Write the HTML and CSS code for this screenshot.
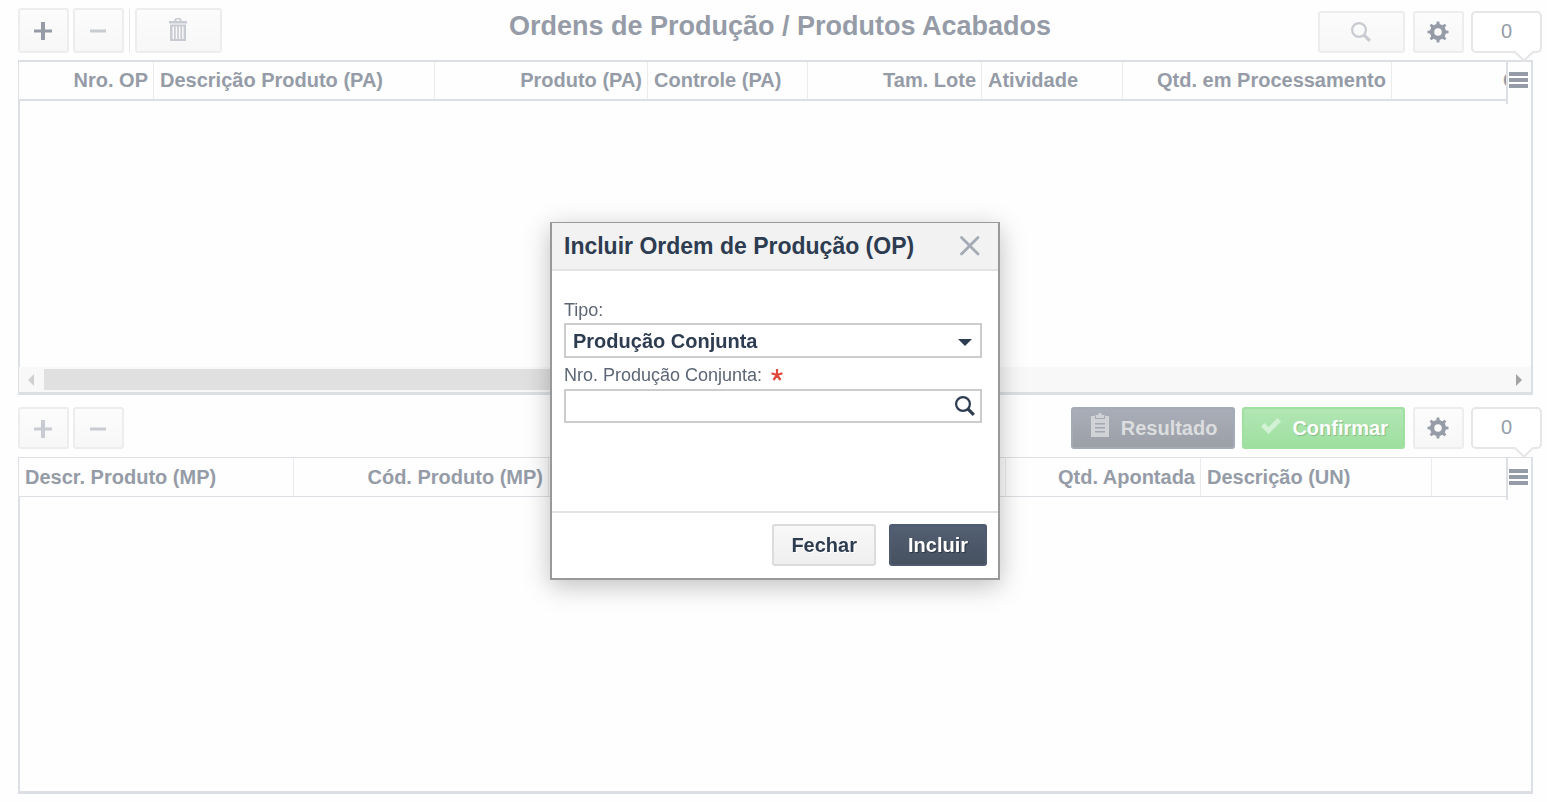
FILE: index.html
```html
<!DOCTYPE html>
<html lang="pt-BR">
<head>
<meta charset="utf-8">
<title>Ordens de Produção</title>
<link rel="stylesheet" href="styles.css">
</head>
<body>
<svg class="defs" aria-hidden="true">
  <symbol id="plus" viewBox="0 0 18 18"><path fill="currentColor" d="M7 0h4v7.500h7v3h-7V18H7v-7.500H0v-3h7z"/></symbol>
  <symbol id="minus" viewBox="0 0 18 18"><path fill="currentColor" d="M1 7.500h16v3H1z"/></symbol>
  <symbol id="gear" viewBox="0 0 22 22">
    <g fill="currentColor">
      <path fill-rule="evenodd" d="M11 3a8 8 0 1 0 0 16a8 8 0 0 0 0-16zm0 4.200a3.800 3.800 0 1 1 0 7.600a3.800 3.800 0 0 1 0-7.600z"/>
      <path id="tooth" d="M9.200 4.500L9.700.5h2.600l.5 4z"/>
      <use href="#tooth" transform="rotate(45 11 11)"/><use href="#tooth" transform="rotate(90 11 11)"/><use href="#tooth" transform="rotate(135 11 11)"/><use href="#tooth" transform="rotate(180 11 11)"/><use href="#tooth" transform="rotate(225 11 11)"/><use href="#tooth" transform="rotate(270 11 11)"/><use href="#tooth" transform="rotate(315 11 11)"/>
    </g>
  </symbol>
  <symbol id="lens" viewBox="0 0 20 20"><circle cx="8" cy="8" r="6.900" fill="none" stroke="currentColor" stroke-width="2.200"/><path d="M12.800 12.800L18.800 18.800" stroke="currentColor" stroke-width="3.200"/></symbol>
  <symbol id="bars" viewBox="0 0 19 16"><path fill="currentColor" d="M0 0h19v4H0zM0 6h19v4H0zM0 12h19v4H0z"/></symbol>
  <symbol id="tail" viewBox="0 0 20 12"><path fill="#fff" d="M1 0L10 9L19 0z"/><path fill="none" stroke="#e6e6e6" stroke-width="2" d="M1 1L10 9.500L19 1"/></symbol>
</svg>

<main class="page">
  <section class="panel">
    <header class="toolbar toolbar-main">
      <div class="tools">
        <button class="btn tall" aria-label="Adicionar"><svg class="i18"><use href="#plus"/></svg></button>
        <button class="btn tall off" aria-label="Remover"><svg class="i18"><use href="#minus"/></svg></button>
        <span class="rule"></span>
        <button class="btn tall wide off" aria-label="Excluir"><svg class="trash" viewBox="0 1 18 23"><path fill="currentColor" fill-rule="evenodd" d="M5.500 4V2.200L7 1h4L12.500 2.200V4H18v2.500H0V4zM7.300 4h3.400V2.600H7.300zM1 7.500h16V24H1zM3.500 9.500V22h1.500V9.500zM6.700 9.500V22h1.500V9.500zM9.900 9.500V22h1.500V9.500zM13.100 9.500V22h1.500V9.500z"/></svg></button>
      </div>
      <h1 class="title">Ordens de Produção / Produtos Acabados</h1>
      <div class="tools end">
        <button class="btn wide off" aria-label="Pesquisar"><svg class="i20"><use href="#lens"/></svg></button>
        <button class="btn gear" aria-label="Configurações"><svg class="i22"><use href="#gear"/></svg></button>
        <output class="count">0<svg class="tail"><use href="#tail"/></svg></output>
      </div>
    </header>
    <div class="grid grid-main">
      <div class="grid-head">
        <div class="columns">
          <table>
            <thead><tr>
              <th class="w135 num">Nro. OP</th><th class="w281">Descrição Produto (PA)</th><th class="w213 num">Produto (PA)</th><th class="w160">Controle (PA)</th><th class="w174 num">Tam. Lote</th><th class="w141">Atividade</th><th class="w269 num">Qtd. em Processamento</th><th class="w157 num">Qtd.</th>
            </tr></thead>
          </table>
        </div>
        <button class="menu" aria-label="Colunas"><svg class="bars"><use href="#bars"/></svg></button>
      </div>
      <div class="grid-body"></div>
      <div class="scrollbar">
        <svg class="arrow pale" viewBox="0 0 6 12"><path fill="currentColor" d="M6 0v12L0 6z"/></svg>
        <div class="track"><div class="thumb"></div></div>
        <svg class="arrow" viewBox="0 0 6 12"><path fill="currentColor" d="M0 0v12l6-6z"/></svg>
      </div>
    </div>
  </section>

  <section class="panel">
    <header class="toolbar">
      <div class="tools">
        <button class="btn off" aria-label="Adicionar material"><svg class="i18"><use href="#plus"/></svg></button>
        <button class="btn off" aria-label="Remover material"><svg class="i18"><use href="#minus"/></svg></button>
      </div>
      <div class="tools end">
        <button class="btn text result"><svg class="clip" viewBox="0 0 18 24"><path fill="currentColor" fill-rule="evenodd" d="M0 3h4l1-1h2l1-2h2l1 2h2l1 1h4v21H0zM4 3v3h10V3h-1v2H5V3zM4 10v1.500h10V10zM4 14v1.500h10V14zM4 18v1.500h10V18z"/></svg>Resultado</button>
        <button class="btn text confirm"><svg class="check" viewBox="0 0 20 16"><path fill="currentColor" d="M0 8.500L3.500 5L7.500 9L16.500 0L20 3.500L7.500 16z"/></svg>Confirmar</button>
        <button class="btn gear" aria-label="Configurações dos materiais"><svg class="i22"><use href="#gear"/></svg></button>
        <output class="count">0<svg class="tail"><use href="#tail"/></svg></output>
      </div>
    </header>
    <div class="grid grid-items">
      <div class="grid-head">
        <div class="columns">
          <table>
            <thead><tr>
              <th class="w275">Descr. Produto (MP)</th><th class="w255 num">Cód. Produto (MP)</th><th class="w457"></th><th class="w195 num">Qtd. Apontada</th><th class="w231">Descrição (UN)</th><th class="w157"></th>
            </tr></thead>
          </table>
        </div>
        <button class="menu" aria-label="Colunas dos materiais"><svg class="bars"><use href="#bars"/></svg></button>
      </div>
      <div class="grid-body"></div>
    </div>
  </section>
</main>

<div class="overlay">
  <form class="dialog" role="dialog" aria-labelledby="dialog-title">
    <header class="dialog-head">
      <h2 id="dialog-title">Incluir Ordem de Produção (OP)</h2>
      <button type="button" class="close" aria-label="Fechar janela"><svg class="i20" viewBox="0 0 20 20"><path fill="none" stroke="currentColor" stroke-width="2.800" stroke-linecap="round" d="M1.500 1.500L18 18M18 1.500L1.500 18"/></svg></button>
    </header>
    <div class="dialog-body">
      <label class="first" for="tipo">Tipo:</label>
      <div class="field">
        <select id="tipo"><option>Produção Conjunta</option></select>
        <svg class="caret" viewBox="0 0 14 7"><path fill="currentColor" d="M0 0h14L7 7z"/></svg>
      </div>
      <label class="second" for="numero">Nro. Produção Conjunta:
        <svg class="star" viewBox="0 0 12 12"><path fill="none" stroke="currentColor" stroke-width="2.200" d="M6 6V0M6 6L.5 4.200M6 6L11.500 4.200M6 6L2.500 11M6 6L9.500 11"/></svg>
      </label>
      <div class="field">
        <input id="numero" type="text" required>
        <button type="button" class="lookup" aria-label="Buscar"><svg class="i20"><use href="#lens"/></svg></button>
      </div>
    </div>
    <footer class="dialog-foot">
      <button type="button" class="action">Fechar</button>
      <button type="submit" class="action primary">Incluir</button>
    </footer>
  </form>
</div>
</body>
</html>
```

FILE: styles.css
```css
* { box-sizing: border-box; }

body {
  margin: 0;
  background: #fefefe;
  color: #959ca7;
  font: 20px/24px "Liberation Sans", Arial, sans-serif;
}

button, input, select { font: inherit; color: inherit; margin: 0; }
svg { display: block; flex: none; }
.defs { position: absolute; width: 0; height: 0; }
.i18 { width: 18px; height: 18px; }
.i20 { width: 20px; height: 20px; }
.i22 { width: 22px; height: 22px; }

.page {
  display: flex;
  flex-direction: column;
  gap: 12px;
  min-height: 100vh;
  padding: 8px 14px 8px 18px;
}
.panel { flex: 1 1 0; display: flex; flex-direction: column; min-width: 0; }

/* Toolbars */
.toolbar {
  display: flex;
  justify-content: space-between;
  margin: 0 -9px 8px 0;
}
.toolbar-main {
  display: grid;
  grid-template-columns: 1fr auto 1fr;
  margin-bottom: 7px;
}
.tools { display: flex; align-items: flex-end; gap: 4px; }
.tools.end { justify-content: flex-end; gap: 7px; }
.title { margin: 0; font-size: 27px; line-height: 36px; font-weight: bold; }

.btn {
  display: flex;
  align-items: center;
  justify-content: center;
  width: 51px;
  height: 42px;
  padding: 2px 1px 0 0;
  border: 2px solid #ededed;
  border-radius: 3px;
  background: linear-gradient(#fcfcfc, #f7f7f7);
  white-space: nowrap;
}
.btn.tall { height: 45px; padding-top: 1px; }
.btn.wide { width: 87px; padding-top: 0; }
.btn.off { color: #c8cbd1; }
.btn.gear { margin-left: 1px; padding-top: 0; }
.rule { width: 1px; height: 45px; margin: 0 1px; background: #e8e8e8; }

.btn.text { width: auto; gap: 12px; font-weight: bold; }
.btn.text svg { align-self: flex-start; }
.btn.result {
  padding: 0 16px 0 18px;
  border-color: #a5abb6;
  background: linear-gradient(#a8aeb9, #9c9fa6);
  color: #dcdddf;
}
.btn.confirm {
  gap: 11px;
  padding: 0 15px 0 17px;
  border-color: #9fe0a1;
  background: linear-gradient(#b3e6b4, #9de09f);
  color: #fff;
  text-shadow: 1px 1px 1px #86bd88;
}
.clip { width: 18px; height: 24px; margin-top: 4px; color: #d0d2d6; }
.check { width: 20px; height: 16px; margin-top: 9px; color: #d3f1d4; }
.trash { width: 18px; height: 23px; margin-bottom: 2px; }

.count {
  position: relative;
  width: 71px;
  height: 42px;
  border: 2px solid #e6e6e6;
  border-radius: 5px;
  background: #fff;
  line-height: 36px;
  text-align: center;
}
.tail { position: absolute; right: 6px; top: 38px; width: 20px; height: 12px; }

/* Data grids */
.grid {
  flex: 1;
  display: flex;
  flex-direction: column;
  border: solid #dce0e4;
  border-width: 2px 2px 3px 1px;
}
.grid-items { border-top-width: 1px; }
.grid-head { display: flex; align-items: flex-start; }
.columns {
  flex: 1 1 0;
  min-width: 0;
  overflow: hidden;
  border-bottom: 2px solid #dce0e4;
}
.grid-items .columns { border-bottom-width: 1px; }
.columns table { width: max-content; table-layout: fixed; border-collapse: separate; border-spacing: 0; }
.columns th {
  height: 37px;
  padding: 0 5px 2px 6px;
  border-right: 1px solid #e9ebed;
  text-align: left;
  white-space: nowrap;
}
.grid-items th { height: 38px; padding-bottom: 0; }
.columns th.num { text-align: right; }
.w135 { min-width: 135px; }
.w141 { min-width: 141px; }
.w157 { min-width: 157px; }
.w160 { min-width: 160px; }
.w174 { min-width: 174px; }
.w195 { min-width: 195px; }
.w213 { min-width: 213px; }
.w231 { min-width: 231px; }
.w255 { min-width: 255px; }
.w269 { min-width: 269px; }
.w275 { min-width: 275px; }
.w281 { min-width: 281px; }
.w457 { min-width: 457px; }

.menu {
  display: flex;
  align-items: flex-start;
  width: 25px;
  height: 42px;
  margin-bottom: -5px;
  padding: 10px 0 0 1px;
  border: 0;
  border-left: 2px solid #dce0e4;
  background: none;
}
.grid-items .menu { padding-top: 11px; }
.bars { width: 19px; height: 16px; }
.grid-body { flex: 1; border-left: 1px solid #dce0e4; }

.scrollbar {
  display: flex;
  align-items: center;
  gap: 10px;
  height: 25px;
  padding: 0 9px;
  background: #f8f8f8;
  color: #a3a3a3;
}
.arrow { width: 6px; height: 12px; }
.arrow.pale { color: #d0d0d0; }
.track { flex: 1; }
.thumb { width: 50%; height: 21px; background: #e0e0e0; }

/* Dialog */
.overlay {
  position: fixed;
  inset: 0;
  display: flex;
  align-items: center;
  justify-content: center;
  padding: 0 14px 0 17px;
}
.dialog {
  width: 450px;
  border: 2px solid #999;
  border-top-width: 1px;
  background: #fff;
  box-shadow: 0 6px 24px rgba(0, 0, 0, 0.25);
  color: #2d3c50;
}
.dialog-head {
  display: flex;
  align-items: center;
  justify-content: space-between;
  height: 48px;
  padding: 0 18px 0 12px;
  border-bottom: 2px solid #e3e3e3;
  background: #f2f2f2;
}
.dialog-head h2 { margin: 0; font-size: 23px; line-height: 28px; }
.close { padding: 0; border: 0; background: none; color: #a5abb4; }
.dialog-body { min-height: 240px; padding: 28px 16px 0 12px; }
.dialog-body label { display: flex; align-items: center; gap: 9px; font-size: 18px; color: #5c6675; }
.first { height: 24px; padding-bottom: 2px; }
.second { height: 31px; padding-top: 2px; }
.star { width: 12px; height: 12px; color: #e0483a; }
.field { position: relative; }
.field select, .field input {
  display: block;
  width: 100%;
  height: 35px;
  padding: 0 7px;
  border: 2px solid #ccc;
  border-radius: 0;
  background: #fff;
  appearance: none;
}
.field select { font-weight: bold; }
.field input { height: 34px; padding-right: 36px; }
.caret { position: absolute; right: 10px; top: 16px; width: 14px; height: 7px; pointer-events: none; }
.lookup { position: absolute; right: 7px; top: 7px; padding: 0; border: 0; background: none; }

.dialog-foot {
  display: flex;
  justify-content: flex-end;
  gap: 13px;
  padding: 11px 11px 12px;
  border-top: 2px solid #e3e3e3;
}
.action {
  height: 42px;
  padding: 0 17px;
  border: 2px solid #dcdcdc;
  border-radius: 3px;
  background: linear-gradient(#f8f8f8, #efefef);
  font-weight: bold;
  text-shadow: 1px 1px 0 #fff;
}
.action.primary {
  border-color: #4e5a6d;
  background: linear-gradient(#535f73, #46525f);
  color: #fff;
  text-shadow: 1px 1px 1px #2b3440;
}
```
